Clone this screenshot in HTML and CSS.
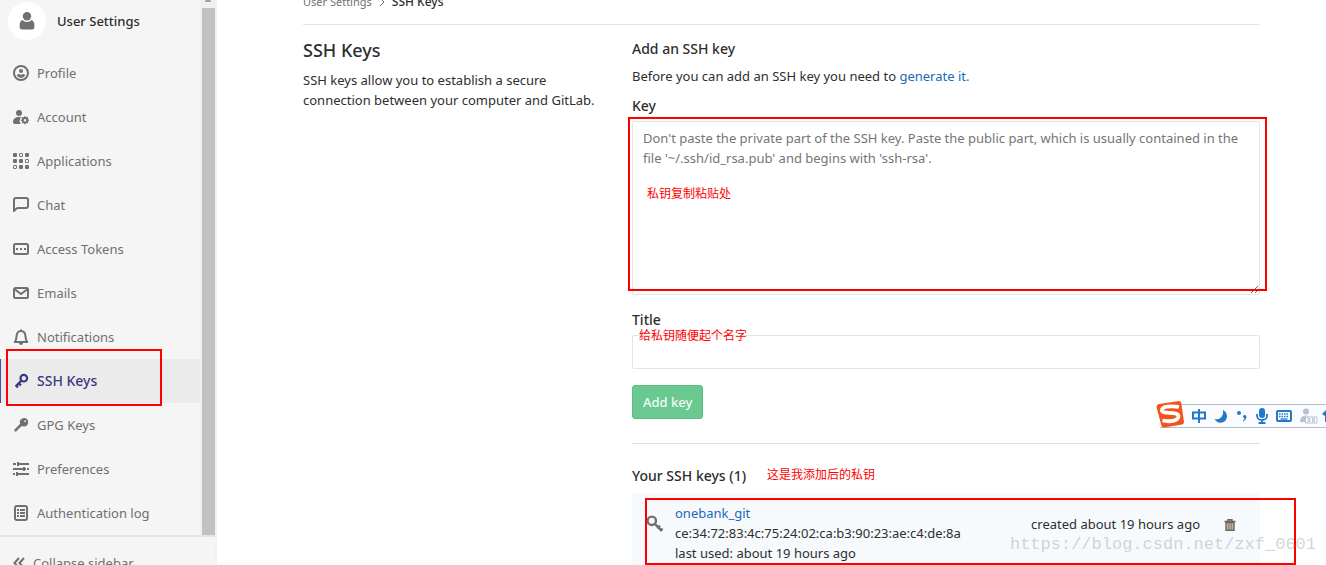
FILE: index.html
```html
<!DOCTYPE html>
<html lang="en">
<head>
<meta charset="utf-8">
<title>SSH Keys · User Settings</title>
<link rel="stylesheet" href="styles.css">
</head>
<body>
<div class="page">
  <aside class="sidebar">
    <div class="sidebar-scroll">
      <div class="sidebar-body">
        <a class="context" href="#">
          <span class="avatar"><svg width="16" height="18" viewBox="0 0 16 18"><circle cx="8" cy="4.300" r="4.200"/><path d="M3.500 8Q5.300 10 8 10T12.500 8Q15.400 9 15.400 13.500V15Q15.400 17.500 13 17.500H3Q.600 17.500.600 15V13.500Q.600 9 3.500 8Z"/></svg></span>
          <span class="context-title">User Settings</span>
        </a>
        <nav class="menu">
          <a class="item" href="#"><svg class="icon" viewBox="0 0 16 16"><circle cx="8" cy="8" r="7" fill="none" stroke="currentColor" stroke-width="2"/><circle cx="8" cy="6" r="2.100"/><path d="M3.800 10.300Q4.500 9 6 9Q8 10.300 10 9Q11.500 9 12.200 10.300Q11 13 8 13T3.800 10.300Z"/></svg><span>Profile</span></a>
          <a class="item" href="#"><svg class="icon" viewBox="0 0 16 16"><circle cx="6" cy="4" r="3"/><path d="M6.500 8C2 8 0 10 0 13.200Q0 15 2 15H7.800A5 5 0 0 1 8.500 8.300Z"/><circle cx="12" cy="11.200" r="2.200" fill="none" stroke="currentColor" stroke-width="1.800"/><path d="M12 7.200V9M12 13.400V15.200M8 11.200H9.800M14.200 11.200H16M9.200 8.400L10.400 9.600M13.600 12.800L14.800 14M14.800 8.400L13.600 9.600M10.400 12.800L9.200 14" stroke="currentColor" stroke-width="1.500"/></svg><span>Account</span></a>
          <a class="item" href="#"><svg class="icon" viewBox="0 0 16 16"><rect width="4" height="4" rx="1"/><rect x="12" width="4" height="4" rx="1"/><rect y="6" width="4" height="4" rx="1"/><rect x="6" y="6" width="4" height="4" rx="1"/><rect x="6" y="12" width="4" height="4" rx="1"/><rect x="12" y="12" width="4" height="4" rx="1"/><g fill="none" stroke="currentColor"><rect x="6.500" y=".500" width="3" height="3" rx=".500"/><rect x="12.500" y="6.500" width="3" height="3" rx=".500"/><rect x=".500" y="12.500" width="3" height="3" rx=".500"/></g></svg><span>Applications</span></a>
          <a class="item" href="#"><svg class="icon" viewBox="0 0 16 16"><path d="M1 14V3Q1 1 3 1H13Q15 1 15 3V9Q15 11 13 11H5Q3.500 11 2.500 12.500Z" fill="none" stroke="currentColor" stroke-width="2" stroke-linejoin="round"/></svg><span>Chat</span></a>
          <a class="item" href="#"><svg class="icon" viewBox="0 0 16 16"><rect x="1" y="3" width="14" height="10" rx="1.500" fill="none" stroke="currentColor" stroke-width="2"/><path d="M3 7H5V9H3ZM7 7H9V9H7ZM11 7H13V9H11Z"/></svg><span>Access Tokens</span></a>
          <a class="item" href="#"><svg class="icon" viewBox="0 0 16 16"><rect x="1" y="3" width="14" height="10" rx="1.500" fill="none" stroke="currentColor" stroke-width="2"/><path d="M2 4.500L8 9L14 4.500" fill="none" stroke="currentColor" stroke-width="2"/></svg><span>Emails</span></a>
          <a class="item" href="#"><svg class="icon" viewBox="0 0 16 16"><path d="M1.800 13C3.500 11 3.300 9 3.500 7.300C3.800 4 5.300 2 8 2S12.200 4 12.500 7.300C12.700 9 12.500 11 14.200 13Z" fill="none" stroke="currentColor" stroke-width="2" stroke-linejoin="round"/><path d="M7 .500H9V2H7ZM6 14H10Q10 16 8 16T6 14Z"/></svg><span>Notifications</span></a>
          <a class="item active" href="#"><svg class="icon" viewBox="0 0 16 16"><circle cx="10.800" cy="5.200" r="3.300" fill="none" stroke="currentColor" stroke-width="2.200"/><path d="M8.500 7.500L2.500 13.500M5.800 10.200L8 12.400M2.800 12.200L5 14.400" stroke="currentColor" stroke-width="2.300"/></svg><span>SSH Keys</span><i class="mark mark-item"></i></a>
          <a class="item" href="#"><svg class="icon" viewBox="0 0 16 16"><path fill-rule="evenodd" d="M7 3.500Q8.300 1 11 1Q15.200 1.200 15.200 5.200Q15 9.300 11 9.400Q9.500 9.400 8.700 9L6.500 11.200L5.500 11.500L5 13L3.800 13.400L3.500 14.500L1.400 14.600L1.500 12.500L7.200 6.800Q6.400 5 7 3.500ZM11.300 3.400V5H12.900V3.400Z"/></svg><span>GPG Keys</span></a>
          <a class="item" href="#"><svg class="icon" viewBox="0 0 16 16"><path d="M0 2H3V4H0ZM4 1H6V2H16V4H6V5H4ZM0 7H10V6H12V7H13V9H12V10H10V9H0ZM14 7H16V9H14ZM0 12H2V14H0ZM3 11H5V12H16V14H5V15H3Z"/></svg><span>Preferences</span></a>
          <a class="item" href="#"><svg class="icon" viewBox="0 0 16 16"><rect x="2" y="1" width="12" height="14" rx="2" fill="none" stroke="currentColor" stroke-width="2"/><path d="M4 4H6V6H4ZM7 4H12V6H7ZM4 7H6V9H4ZM7 7H12V9H7ZM4 10H6V12H4ZM7 10H12V12H7Z"/></svg><span>Authentication log</span></a>
        </nav>
      </div>
      <div class="track"><svg class="track-arrow" viewBox="0 0 8 8"><path d="M1 2H7V1L6 0H2L1 1Z"/></svg><div class="thumb"></div></div>
    </div>
    <button class="collapse" type="button"><svg width="12" height="12" viewBox="0 0 12 12"><path d="M6 1L1.500 6L6 11M11 1L6.500 6L11 11" fill="none" stroke="currentColor" stroke-width="2"/></svg><span>Collapse sidebar</span></button>
  </aside>

  <main class="content">
    <nav class="crumbs"><a href="#">User Settings</a><svg width="6" height="8" viewBox="0 0 6 8"><path d="M1 0L5 4L1 8" fill="none" stroke="currentColor"/></svg><span class="crumb-current">SSH Keys</span></nav>
    <div class="columns">
      <section class="intro">
        <h1>SSH Keys</h1>
        <p>SSH keys allow you to establish a secure connection between your computer and GitLab.</p>
      </section>
      <section class="details">
        <form class="key-form">
          <h2>Add an SSH key</h2>
          <p class="hint">Before you can add an SSH key you need to <a href="#">generate it.</a></p>
          <label for="key">Key</label>
          <div class="field">
            <textarea id="key" placeholder="Don't paste the private part of the SSH key. Paste the public part, which is usually contained in the file '~/.ssh/id_rsa.pub' and begins with 'ssh-rsa'."></textarea>
            <i class="mark mark-key"></i>
            <span class="note note-key" lang="zh">私钥复制粘贴处</span>
          </div>
          <label for="title">Title</label>
          <div class="field">
            <input id="title" type="text">
            <span class="note note-title" lang="zh">给私钥随便起个名字</span>
          </div>
          <button class="submit" type="button">Add key</button>
        </form>
        <div class="list-head">
          <h2>Your SSH keys (1)</h2>
          <span class="note" lang="zh">这是我添加后的私钥</span>
        </div>
        <div class="key-row">
          <svg class="key-icon" width="18" height="18" viewBox="0 0 18 18"><circle cx="5.800" cy="5.800" r="4.200" fill="none" stroke="currentColor" stroke-width="2.400"/><path d="M8.800 8.800L16 16M11.300 13.300L14 10.600M14 16L16.500 13.500" stroke="currentColor" stroke-width="2.400" fill="none"/></svg>
          <div class="key-info">
            <a href="#">onebank_git</a>
            <div>ce:34:72:83:4c:75:24:02:ca:b3:90:23:ae:c4:de:8a</div>
            <div>last used: about 19 hours ago</div>
          </div>
          <span class="created">created about 19 hours ago</span>
          <button class="remove" type="button" aria-label="Remove"><svg width="12" height="12" viewBox="0 0 12 12"><path d="M4 2V.700H8V2M.500 2.500H11.500" fill="none" stroke="currentColor" stroke-width="1.400"/><path d="M2 3.500H10V11.300H2Z" fill="#c9b297" stroke="currentColor" stroke-width="1.400"/><path d="M4.500 4V10.500M6 4V10.500M7.500 4V10.500" stroke="currentColor" stroke-width=".500"/></svg></button>
          <i class="mark mark-row"></i>
        </div>
      </section>
    </div>
  </main>

  <div class="ime">
    <svg class="ime-logo" viewBox="0 0 28 28"><path d="M3 4L23 1Q25 1 25.300 3L28 22Q28 24 26 24.500L8 27.500Q6 27.500 5.500 26L.500 7Q.500 4.500 3 4Z" fill="#f3541c"/><path d="M23 7C15 5.500 5.500 6.500 6 10.500C6.500 14.500 22 11 22.500 16C22.500 21.500 13 22 6.500 20.500" fill="none" stroke="#fff" stroke-width="3.800"/></svg>
    <svg width="14" height="14" viewBox="0 0 14 14"><path d="M1 3.500H13V9.500H1ZM7 0V14" fill="none" stroke="currentColor" stroke-width="2"/></svg>
    <svg width="14" height="14" viewBox="0 0 14 14"><path d="M9 1C15 4 14 12 8 13.500Q3 14.300.500 10C5 11.500 10 8 9 1Z"/></svg>
    <svg width="12" height="14" viewBox="0 0 12 14"><circle cx="3" cy="4" r="2"/><path d="M7 7.500Q7 6 8.500 6Q10.500 6 10.500 8Q10.500 10.500 7.500 12.500L7 11.500Q8.500 10.300 8.600 9.200Q7 9 7 7.500Z"/></svg>
    <svg width="12" height="16" viewBox="0 0 12 16"><rect x="3" width="6" height="10" rx="3"/><path d="M1 6V8Q1.500 12 6 12T11 8V6M6 12V15M2.500 15H9.500" fill="none" stroke="currentColor" stroke-width="1.800"/></svg>
    <svg width="16" height="12" viewBox="0 0 16 12"><rect x="1" y="1" width="14" height="10" rx="1" fill="none" stroke="currentColor" stroke-width="2"/><path d="M3 4H13M3 6.500H13" stroke="currentColor" stroke-width="1.500" stroke-dasharray="1.500 1"/><path d="M4.500 9H11.500" stroke="currentColor" stroke-width="1.300"/></svg>
    <svg class="ime-muted" width="18" height="16" viewBox="0 0 18 16"><circle cx="6" cy="3.500" r="3"/><path d="M0 14Q0 7.500 6 7.500Q8 7.500 9 8.500H5V14Z"/><path d="M5.500 9H17V15H5.500ZM7.500 10.500H10V12H7.500M7.500 13.500H10V12M15 10.500H12.500V12H15M15 13.500H12.500V12" fill="#fff" stroke="currentColor"/></svg>
    <svg class="ime-skin" width="14" height="14" viewBox="0 0 14 14"><path d="M4 1L10 1L14 5L11 7V13H3V7L0 5Z"/></svg>
  </div>
  <div class="watermark">https://blog.csdn.net/zxf_0601</div>
</div>
</body>
</html>
```
FILE: styles.css
```css
* { box-sizing: border-box; }
body {
  margin: 0;
  overflow: hidden;
  font: 13px/20px "Noto Sans", "Noto Sans CJK SC", sans-serif;
  color: #2e2e2e;
  background: #fff;
}
a { color: #1b69b6; text-decoration: none; }
button, input, textarea { font: inherit; }
h1, h2, p { margin: 0; }
svg { fill: currentColor; flex: none; }

.page { position: relative; display: flex; height: 100vh; overflow: hidden; }

.sidebar {
  display: flex;
  flex-direction: column;
  flex: none;
  width: 217px;
  background: #f5f5f5;
  border-right: 2px solid #f0f0f0;
  color: #707070;
}
.sidebar-scroll { display: flex; flex: none; }
.sidebar-body { flex: 1; }
.context { display: flex; align-items: center; gap: 11px; padding: 2px 8px 11px; color: #2e2e2e; }
.avatar {
  display: flex;
  align-items: center;
  justify-content: center;
  width: 38px;
  height: 38px;
  border-radius: 50%;
  background: #fff;
  color: #707070;
}
.context-title { font-weight: 500; }
.item { position: relative; display: flex; align-items: center; gap: 8px; height: 44px; padding-left: 13px; color: #707070; }
.icon { width: 16px; height: 16px; }
.active { background: #ebebeb; color: #393982; box-shadow: inset 1px 0 #4b4ba3; font-size: 14px; font-weight: 500; }

.track { display: flex; flex-direction: column; align-items: center; width: 15px; padding-left: 1px; background: #f0f0f0; }
.track-arrow { width: 8px; height: 8px; color: #a0a0a0; }
.thumb { flex: 1; width: 13px; background: #c1c1c1; }
.collapse {
  display: flex;
  align-items: center;
  flex: none;
  gap: 8px;
  padding: 16px 13px;
  border: 0;
  border-top: 2px solid #e5e5e5;
  background: #f5f5f5;
  color: #707070;
}

.content { flex: 1; min-width: 0; padding: 0 66px 0 86px; }
.crumbs {
  display: flex;
  align-items: center;
  gap: 7px;
  margin-top: -8px;
  padding-bottom: 12px;
  border-bottom: 1px solid #e5e5e5;
  font-size: 11px;
  color: #707070;
}
.crumbs a { color: #707070; }
.crumb-current { color: #2e2e2e; font-size: 12px; font-weight: 500; }
.columns { display: grid; grid-template-columns: 329fr 628fr; padding-top: 14px; }
.intro { padding-right: 32px; }
.intro h1 { margin-bottom: 9px; font-size: 18px; line-height: 22px; font-weight: 500; }
h2, label { display: block; font-size: 14px; font-weight: 500; }
.hint { margin: 7px 0 10px; }
label { margin-bottom: 5px; }
.field { position: relative; display: flex; }
.field textarea, .field input {
  width: 100%;
  border: 1px solid #e5e5e5;
  border-radius: 2px;
  padding: 6px 10px;
  background: #fff;
  color: #2e2e2e;
}
.field textarea { height: 174px; margin-bottom: 15px; resize: vertical; }
.field input { height: 34px; }
::placeholder { color: #757575; opacity: 1; }
.submit {
  margin-top: 16px;
  padding: 6px 10px;
  border: 1px solid #5fbd84;
  border-radius: 3px;
  background: #69c990;
  color: #f3fbf6;
  font-weight: 500;
}
.key-form { padding-bottom: 24px; border-bottom: 1px solid #e0e0e0; }
.list-head { display: flex; align-items: flex-start; gap: 21px; padding: 22px 0 7px; }

.note { font: 12px/16px "Noto Sans CJK SC", sans-serif; color: #f00; }
.note-key { position: absolute; top: 64px; left: 15px; }
.note-title { position: absolute; top: -8px; left: 7px; }
.mark { position: absolute; border: 2px solid #f00; pointer-events: none; }
.mark-item { top: -10px; bottom: -3px; left: 6px; width: 156px; }
.mark-key { top: -4px; right: -7px; bottom: 19px; left: -4px; }
.mark-row { top: 5px; right: -36px; bottom: 16px; left: 13px; }

.key-row { position: relative; display: flex; padding: 10px 24px 18px 14px; background: #f6fafd; }
.key-icon { margin: 12px 11px 0 0; color: #707070; }
.key-info { flex: 1; }
.created { margin: 11px 24px 0 0; }
.remove { align-self: flex-start; display: flex; margin-top: 16px; padding: 0; border: 0; background: none; color: #6b665f; }

.ime {
  position: absolute;
  top: 404px;
  right: -10px;
  display: flex;
  align-items: center;
  gap: 8px;
  height: 24px;
  border-top: 1px solid #afbdcc;
  border-bottom: 1px solid #afbdcc;
  background: #fafcff;
  color: #2378c8;
}
.ime-logo { width: 28px; height: 28px; margin: -4px 0 0 -4px; }
.ime-muted { color: #b7c0d5; }
.ime-skin { margin-left: -4px; }
.watermark {
  position: absolute;
  right: 10px;
  bottom: 8px;
  font: 17px/24px "Liberation Mono", monospace;
  color: rgba(170, 170, 170, 0.5);
}
```
